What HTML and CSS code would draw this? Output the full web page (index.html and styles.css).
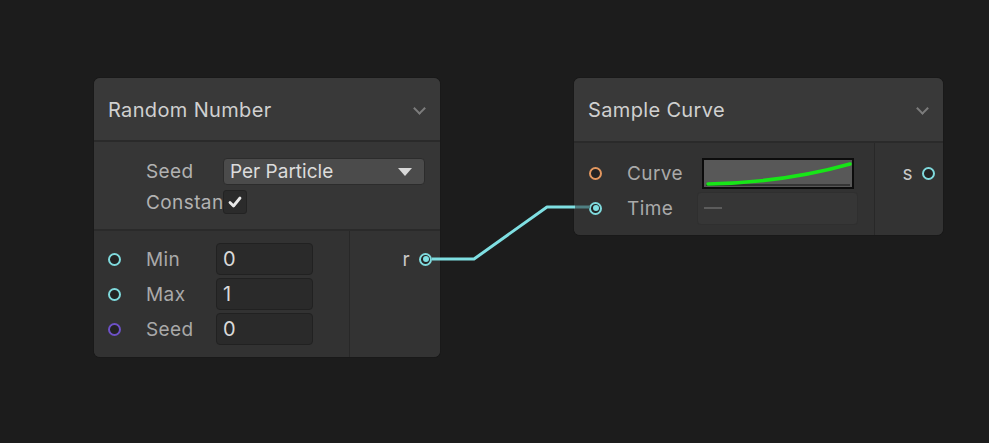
FILE: index.html
```html
<!DOCTYPE html>
<html lang="en">

<head>
	<meta charset="UTF-8">
	<meta name="viewport" content="width=device-width, initial-scale=1.0">
	<title>Graph</title>
	<link rel="stylesheet" href="styles.css">
</head>

<body>
	<div class="graph">
		<svg class="wires" width="989" height="443" viewBox="0 0 989 443">
			<path class="wire" d="M432 259 H474 L547 207 H575" />
			<path class="wire-stub" d="M575 207 H590" />
		</svg>

		<div class="node node-random">
			<div class="node-header">
				<span class="node-title">Random Number</span>
				<span class="chevron"></span>
			</div>
			<div class="node-settings">
				<div class="setting-row">
					<span class="setting-label">Seed</span>
					<div class="dropdown">
						<span>Per Particle</span>
						<span class="dropdown-arrow"></span>
					</div>
				</div>
				<div class="setting-row">
					<span class="setting-label">Constant</span>
					<div class="checkbox">
						<svg width="16" height="16" viewBox="0 0 16 16">
							<path d="M3 8.5 L6.5 12 L13 4" />
						</svg>
					</div>
				</div>
			</div>
			<div class="node-body">
				<div class="inputs">
					<div class="port-row">
						<span class="port port-float"></span>
						<span class="port-label">Min</span>
						<div class="field">0</div>
					</div>
					<div class="port-row">
						<span class="port port-float"></span>
						<span class="port-label">Max</span>
						<div class="field">1</div>
					</div>
					<div class="port-row">
						<span class="port port-uint"></span>
						<span class="port-label">Seed</span>
						<div class="field">0</div>
					</div>
				</div>
				<div class="outputs">
					<div class="port-row out">
						<span class="port-label">r</span>
						<span class="port port-float connected"></span>
					</div>
				</div>
			</div>
		</div>

		<div class="node node-curve">
			<div class="node-header">
				<span class="node-title">Sample Curve</span>
				<span class="chevron"></span>
			</div>
			<div class="node-body">
				<div class="inputs">
					<div class="port-row">
						<span class="port port-curve"></span>
						<span class="port-label">Curve</span>
						<div class="curve-field">
							<svg width="148" height="27" viewBox="0 0 148 27">
								<line class="curve-axis" x1="2" y1="25" x2="146" y2="25" />
								<path class="curve-line" d="M4 24 C50 23 100 17 146 4" />
							</svg>
						</div>
					</div>
					<div class="port-row">
						<span class="port port-float connected"></span>
						<span class="port-label">Time</span>
						<div class="field field-empty"><span class="dash"></span></div>
					</div>
				</div>
				<div class="outputs">
					<div class="port-row out">
						<span class="port-label">s</span>
						<span class="port port-float"></span>
					</div>
				</div>
			</div>
		</div>
	</div>
</body>

</html>
```

FILE: styles.css
```css
body {
	margin: 0;
	background: #1c1c1c;
	font-family: Inter, "Noto Sans", sans-serif;
	color: #c4c4c4;
	overflow: hidden;
}

.graph {
	position: relative;
	width: 989px;
	height: 443px;
}

.wires {
	position: absolute;
	left: 0;
	top: 0;
	z-index: 2;
	pointer-events: none;
}

.wire {
	fill: none;
	stroke: #7fdfe2;
	stroke-width: 3;
	stroke-linejoin: round;
}

.wire-stub {
	fill: none;
	stroke: #4f7f82;
	stroke-width: 3;
}

/* nodes sit on a free canvas */
.node {
	position: absolute;
	background: #333333;
	border-radius: 6px;
	overflow: hidden;
	box-shadow: 0 0 0 1px #191919;
	z-index: 1;
}

.node-random {
	left: 94px;
	top: 78px;
	width: 346px;
	height: 279px;
}

.node-curve {
	left: 574px;
	top: 78px;
	width: 369px;
	height: 157px;
}

.node-header {
	height: 62px;
	display: flex;
	align-items: center;
	justify-content: space-between;
	padding: 0 16px 0 14px;
	background: #393939;
	border-bottom: 2px solid #2a2a2a;
}

.node-curve .node-header {
	height: 63px;
}

.node-title {
	font-size: 20px;
	letter-spacing: 0.35px;
	color: #d0d0d0;
	padding-top: 1px;
}

.chevron {
	width: 7px;
	height: 7px;
	border-right: 2px solid #7c7c7c;
	border-bottom: 2px solid #7c7c7c;
	transform: rotate(45deg);
	margin-top: -2px;
}

.node-settings {
	background: #363636;
	border-bottom: 2px solid #2a2a2a;
	padding: 16px 15px 0 52px;
	height: 71px;
	display: flex;
	flex-direction: column;
	gap: 5px;
}

.setting-row {
	display: flex;
	align-items: center;
}

/* label runs under the checkbox, like the editor does */
.setting-label {
	width: 77px;
	flex: none;
	white-space: nowrap;
	font-size: 19px;
	letter-spacing: 0.4px;
	color: #b2b2b2;
}

.dropdown {
	flex: 1;
	height: 25px;
	display: flex;
	align-items: center;
	justify-content: space-between;
	padding: 0 12px 0 6px;
	background: #4b4b4b;
	border: 1px solid #2c2c2c;
	border-radius: 4px;
	font-size: 19px;
	color: #dcdcdc;
}

.dropdown-arrow {
	width: 0;
	height: 0;
	border-left: 7px solid transparent;
	border-right: 7px solid transparent;
	border-top: 8px solid #d8d8d8;
}

.checkbox {
	position: relative;
	width: 22px;
	height: 22px;
	background: #2b2b2b;
	border: 1px solid #232323;
	border-radius: 3px;
	display: flex;
	align-items: center;
	justify-content: center;
}

.checkbox path {
	fill: none;
	stroke: #e8e8e8;
	stroke-width: 2.8;
	stroke-linecap: round;
	stroke-linejoin: round;
}

.node-body {
	display: flex;
	height: 100%;
}

.inputs {
	display: flex;
	flex-direction: column;
	gap: 3px;
	padding: 12px 0 0 14px;
	background: #323232;
	box-sizing: border-box;
}

.node-random .inputs {
	width: 255px;
}

.node-curve .inputs {
	width: 300px;
	padding-top: 14px;
	padding-left: 15px;
}

.outputs {
	flex: 1;
	border-left: 1px solid #282828;
	background: #333333;
	padding: 12px 8px 0 0;
}

.node-curve .outputs {
	padding-top: 14px;
}

.port-row {
	display: flex;
	align-items: center;
	height: 32px;
}

.port-row.out {
	justify-content: flex-end;
	gap: 9px;
}

.port {
	width: 9px;
	height: 9px;
	border-radius: 50%;
	border: 2px solid #7fd9dc;
	background: #232323;
	position: relative;
	flex: none;
}

.port.connected::after {
	content: "";
	position: absolute;
	left: 1.5px;
	top: 1.5px;
	width: 6px;
	height: 6px;
	border-radius: 50%;
	background: #7fdfe2;
}

.port-uint {
	border-color: #6d51c6;
}

.port-curve {
	border-color: #e3975f;
}

.port-label {
	font-size: 19px;
	letter-spacing: 0.4px;
	color: #a9a9a9;
}

.inputs .port-label {
	width: 70px;
	margin-left: 25px;
}

.outputs .port-label {
	color: #c8c8c8;
}

.field {
	width: 97px;
	height: 32px;
	box-sizing: border-box;
	display: flex;
	align-items: center;
	padding-left: 6px;
	background: #2a2a2a;
	border: 1px solid #212121;
	border-radius: 4px;
	font-size: 20px;
	color: #dadada;
}

.field-empty {
	width: 161px;
	height: 33px;
	background: #363636;
	border-color: #2f2f2f;
}

.dash {
	width: 18px;
	height: 1.5px;
	background: #5c5c5c;
}

.curve-field {
	width: 152px;
	height: 31px;
	box-sizing: border-box;
	margin-left: 5px;
	border: 2px solid #0c0c0c;
	background: #585858;
	display: flex;
}

.curve-axis {
	stroke: #353535;
	stroke-width: 2;
}

.curve-line {
	fill: none;
	stroke: #17e617;
	stroke-width: 3.5;
	stroke-linecap: round;
}
```
